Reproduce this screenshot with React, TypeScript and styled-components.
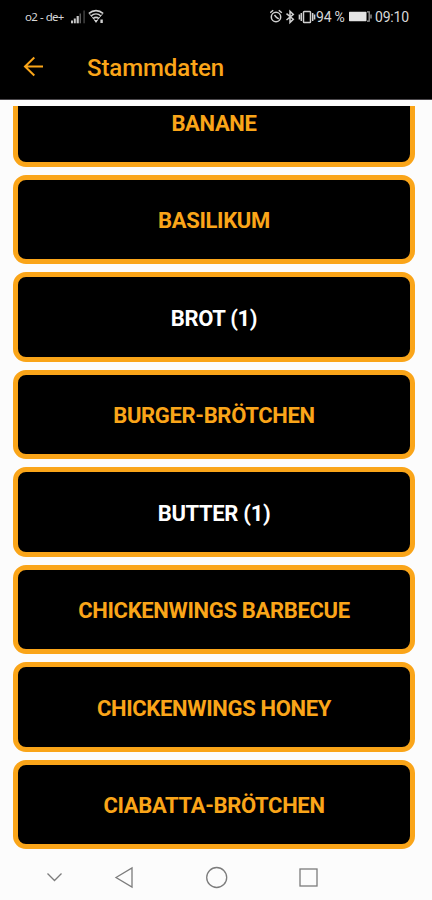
import React from "react";
import styled, { createGlobalStyle } from "styled-components";

const AMBER = "#faa519";

const GlobalStyle = createGlobalStyle`
  * { box-sizing: border-box; }
  body { margin: 0; background: #fcfcfc; font-family: Roboto, "Liberation Sans", sans-serif; }
`;

const Screen = styled.div`
  width: 432px;
  height: 900px;
  display: flex;
  flex-direction: column;
  overflow: hidden;
  background: #fcfcfc;
`;

const Header = styled.header`
  flex: none;
  height: 100px;
  background: #000;
  border-bottom: 1px solid #4a474b;
`;

const StatusBar = styled.div`
  height: 34px;
  padding: 0 22px 0 25px;
  display: flex;
  align-items: center;
  color: #d8d8d8;
`;

const Carrier = styled.span`
  width: 46px;
  font-family: "Noto Sans", sans-serif;
  font-size: 11.5px;
  line-height: 16px;
  letter-spacing: -0.75px;
  word-spacing: 0.6px;
  white-space: nowrap;
`;

const StatusIcons = styled.svg`
  display: block;
  flex: none;
`;

const StatusRight = styled.div`
  margin-left: auto;
  display: flex;
  align-items: center;
`;

const StatusText = styled.span<{ $width: number }>`
  width: ${(p) => p.$width}px;
  font-size: 14px;
  line-height: 16px;
  letter-spacing: -0.2px;
  white-space: nowrap;
`;

const TitleBar = styled.div`
  height: 65px;
  padding-left: 23px;
  display: flex;
  align-items: center;
  gap: 43px;
`;

const Title = styled.h1`
  margin: 3px 0 0;
  color: ${AMBER};
  font-size: 24px;
  line-height: 30px;
  font-weight: 500;
  letter-spacing: -0.08px;
`;

const List = styled.main`
  flex: none;
  height: 746px;
  margin-top: 6px;
  padding: 0 17px 0 13px;
  overflow: hidden;
`;

const Items = styled.div`
  margin-top: -29px;
  display: flex;
  flex-direction: column;
  gap: 8px;
`;

const Item = styled.button<{ $active?: boolean }>`
  height: 89.5px;
  width: 402px;
  padding: 4px 0 0;
  display: flex;
  align-items: center;
  justify-content: center;
  background: #000;
  border: 5px solid ${AMBER};
  border-radius: 13px;
  color: ${(p) => (p.$active ? "#fff" : AMBER)};
  font-family: inherit;
  font-size: 22px;
  line-height: 28px;
  font-weight: 700;
  letter-spacing: -0.33px;
  white-space: nowrap;
`;

const NavBar = styled.nav`
  flex: 1;
  display: flex;
  align-items: flex-start;
  padding: 13px 0 0 42px;
`;

const NavIcon = styled.svg<{ $gap: number }>`
  display: block;
  width: 24px;
  height: 24px;
  margin-right: ${(p) => p.$gap}px;
  fill: none;
  stroke: #7c7c7c;
  stroke-width: 1.3;
`;

const ITEMS = [
  { label: "BANANE" },
  { label: "BASILIKUM" },
  { label: "BROT (1)", active: true },
  { label: "BURGER-BRÖTCHEN" },
  { label: "BUTTER (1)", active: true },
  { label: "CHICKENWINGS BARBECUE" },
  { label: "CHICKENWINGS HONEY" },
  { label: "CIABATTA-BRÖTCHEN" },
];

const SignalAndWifi = () => (
  <StatusIcons width="36" height="18" viewBox="0 0 36 18">
    <g fill="#c8c8c8">
      <rect x="0" y="12.5" width="2" height="2.8" />
      <rect x="2.8" y="10.5" width="2" height="4.8" />
      <rect x="5.6" y="8" width="2.2" height="7.3" />
      <rect x="8.6" y="5.5" width="1.3" height="9.8" fill="#666" />
      <rect x="12.4" y="2.5" width="1.4" height="12.8" fill="#444" />
    </g>
    <g fill="none" stroke="#d0d0d0" strokeWidth="1.6">
      <path d="M18 5.4C22 1.7 28 1.7 32 5.4" />
      <path d="M20 8C23 5.3 27 5.3 30 8" />
      <path d="M22 10.6C24 9 26 9 28 10.6" />
      <path d="M18 5.4L25 13.5L32 5.4" strokeWidth=".8" />
    </g>
    <path d="M23 12H27L25 15ZM29.4 11.5H31.8V15H29.4Z" fill="#d0d0d0" />
  </StatusIcons>
);

const AlertIcons = () => (
  <StatusIcons width="46" height="18" viewBox="0 0 46 18">
    <g fill="none" stroke="#d0d0d0" strokeWidth="1.5">
      <circle cx="6" cy="9" r="4.7" />
      <path d="M4.5 7L6.5 9.5L8.8 10.8M.2 4.8L3.2 2.2M8.8 2.2L11.8 4.8" />
      <path d="M16.5 5.6L23.3 11.2L20 14.4V3.2L23.3 6.4L16.5 12" />
      <rect x="33.5" y="3.5" width="7" height="11" rx=".8" />
      <path d="M31.3 5V13M42.7 5V13M29.4 6.5V11.5M44.6 6.5V11.5" />
    </g>
  </StatusIcons>
);

const Battery = () => (
  <StatusIcons width="27" height="18" viewBox="0 0 27 18">
    <rect x="1" y="3.8" width="17.5" height="9.4" rx=".6" fill="#e4e4e4" />
    <path d="M19 3.8H21.2V13.2H19M23 6.5V10.5" fill="none" stroke="#a0a0a0" strokeWidth="1.3" />
  </StatusIcons>
);

const BackArrow = () => (
  <StatusIcons width="21" height="21" viewBox="0 0 21 21">
    <path d="M11.3 1.5L2 10.5L11.3 19.5M2 10.5H20" fill="none" stroke={AMBER} strokeWidth="2" />
  </StatusIcons>
);

export default function App() {
  return (
    <Screen>
      <GlobalStyle />
      <Header>
        <StatusBar>
          <Carrier>o2 - de+</Carrier>
          <SignalAndWifi />
          <StatusRight>
            <AlertIcons />
            <StatusText $width={32}>94 %</StatusText>
            <Battery />
            <StatusText $width={35}>09:10</StatusText>
          </StatusRight>
        </StatusBar>
        <TitleBar>
          <BackArrow />
          <Title>Stammdaten</Title>
        </TitleBar>
      </Header>
      <List>
        <Items>
          {ITEMS.map((item) => (
            <Item key={item.label} $active={item.active}>
              {item.label}
            </Item>
          ))}
        </Items>
      </List>
      <NavBar>
        <NavIcon viewBox="0 0 24 24" $gap={46}>
          <path d="M5.5 8.5L12.5 15.5L19.5 8.5" />
        </NavIcon>
        <NavIcon viewBox="0 0 24 24" $gap={69}>
          <path d="M4 12.5L20 3V22Z" />
        </NavIcon>
        <NavIcon viewBox="0 0 24 24" $gap={67}>
          <circle cx="11.7" cy="12.5" r="10" />
        </NavIcon>
        <NavIcon viewBox="0 0 24 24" $gap={0}>
          <rect x="4" y="4" width="17" height="17" />
        </NavIcon>
      </NavBar>
    </Screen>
  );
}
